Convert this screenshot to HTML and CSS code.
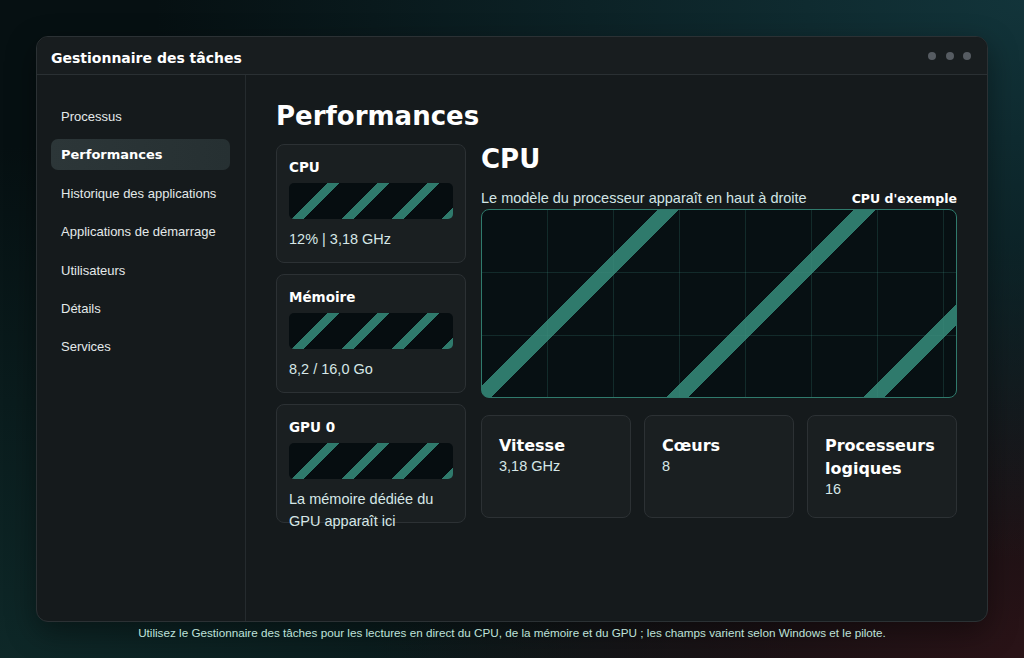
FILE: index.html
```
<!DOCTYPE html>
<html lang="fr">

<head>
    <meta charset="UTF-8">
    <meta name="viewport" content="width=device-width, initial-scale=1.0">
    <title>Gestionnaire des tâches</title>
    <link rel="stylesheet" href="styles.css">
</head>

<body>
    <div class="window">
        <header class="titlebar">
            <h1>Gestionnaire des tâches</h1>
            <div class="dots"><span></span><span></span><span></span></div>
        </header>
        <div class="window-body">
            <nav class="sidebar">
                <a href="javascript:;" class="nav-item">Processus</a>
                <a href="javascript:;" class="nav-item on">Performances</a>
                <a href="javascript:;" class="nav-item">Historique des applications</a>
                <a href="javascript:;" class="nav-item">Applications de démarrage</a>
                <a href="javascript:;" class="nav-item">Utilisateurs</a>
                <a href="javascript:;" class="nav-item">Détails</a>
                <a href="javascript:;" class="nav-item">Services</a>
            </nav>
            <main class="content">
                <h2 class="page-title">Performances</h2>
                <div class="perf">
                    <div class="devices">
                        <div class="device">
                            <h3>CPU</h3>
                            <div class="bar"></div>
                            <p>12% | 3,18 GHz</p>
                        </div>
                        <div class="device">
                            <h3>Mémoire</h3>
                            <div class="bar"></div>
                            <p>8,2 / 16,0 Go</p>
                        </div>
                        <div class="device">
                            <h3>GPU 0</h3>
                            <div class="bar"></div>
                            <p>La mémoire dédiée du GPU apparaît ici</p>
                        </div>
                    </div>
                    <section class="detail">
                        <h2 class="detail-title">CPU</h2>
                        <div class="detail-meta">
                            <span>Le modèle du processeur apparaît en haut à droite</span>
                            <strong>CPU d'exemple</strong>
                        </div>
                        <div class="graph"></div>
                        <div class="stats">
                            <div class="stat">
                                <h4>Vitesse</h4>
                                <p>3,18 GHz</p>
                            </div>
                            <div class="stat">
                                <h4>Cœurs</h4>
                                <p>8</p>
                            </div>
                            <div class="stat">
                                <h4>Processeurs logiques</h4>
                                <p>16</p>
                            </div>
                        </div>
                    </section>
                </div>
            </main>
        </div>
    </div>
    <p class="footnote">Utilisez le Gestionnaire des tâches pour les lectures en direct du CPU, de la mémoire et du GPU ; les champs varient selon Windows et le pilote.</p>
</body>

</html>
```

FILE: styles.css
```
* {
    margin: 0;
    padding: 0;
    box-sizing: border-box;
    text-decoration: none;
}

html,
body {
    height: 100%;
}

body {
    padding: 36px 36px 0;
    overflow: hidden;
    font-family: "Liberation Sans", Arial, sans-serif;
    color: #d6e7e7;
    background:
        radial-gradient(ellipse at 100% 0%, #12343a 0%, rgba(18, 52, 58, 0) 60%),
        radial-gradient(ellipse at 100% 100%, #2a1317 0%, rgba(42, 19, 23, 0) 45%),
        radial-gradient(ellipse at 0% 100%, #0e2828 0%, rgba(14, 40, 40, 0) 55%),
        #061012;
}

h1,
h2,
h3,
h4,
strong,
.nav-item.on {
    font-family: "DejaVu Sans", sans-serif;
    font-weight: 700;
    color: #fff;
}

.window {
    display: flex;
    flex-direction: column;
    height: 586px;
    border: 1px solid #2b3134;
    border-radius: 12px;
    background: #151a1c;
    overflow: hidden;
    box-shadow: 0 10px 30px rgba(0, 0, 0, .4);
}

.titlebar {
    display: flex;
    align-items: center;
    justify-content: space-between;
    height: 38px;
    padding: 0 16px 0 14px;
    border-bottom: 1px solid #2a3033;
    background: #181d1f;
}

.titlebar h1 {
    padding-top: 4px;
    font-size: 14px;
}

.dots {
    display: flex;
    gap: 9.5px;
}

.dots span {
    width: 8px;
    height: 8px;
    border-radius: 50%;
    background: #565c62;
}

.window-body {
    flex: 1;
    display: flex;
}

.sidebar {
    display: flex;
    flex-direction: column;
    gap: 7.4px;
    width: 209px;
    padding: 26px 15px 0 14px;
    border-right: 1px solid #252b2e;
}

.nav-item {
    display: block;
    padding: 8px 10px;
    line-height: 15px;
    font-size: 13px;
    color: #e4e9ea;
    border-radius: 7px;
}

.nav-item.on {
    background: linear-gradient(90deg, #2c3638, #263032);
}

.content {
    flex: 1;
    padding: 26px 30px 0 30px;
}

.page-title {
    font-size: 26px;
    line-height: 30px;
    margin-bottom: 13px;
}

.perf {
    display: grid;
    grid-template-columns: 190px 1fr;
    gap: 15px;
}

.devices {
    display: flex;
    flex-direction: column;
    gap: 11px;
}

.device {
    height: 119px;
    padding: 13px 12px;
    border: 1px solid #2c3134;
    border-radius: 8px;
    background: #1a1f21;
}

.device h3 {
    font-size: 13.5px;
    line-height: 18px;
}

.bar {
    height: 36px;
    margin-top: 7px;
    border-radius: 5px;
    background:
        repeating-linear-gradient(135deg, rgba(0, 0, 0, 0) 0 27px, #2f7a6c 27px 35.4px),
        #060d10;
}

.device p {
    margin-top: 10px;
    font-size: 14.5px;
    line-height: 21.5px;
}

.detail-title {
    font-size: 26px;
    line-height: 30px;
}

.detail-meta {
    display: flex;
    justify-content: space-between;
    align-items: baseline;
    margin-top: 16px;
    font-size: 14.5px;
    line-height: 17px;
    color: #d2e5e5;
}

.detail-meta strong {
    font-size: 12.5px;
}

.graph {
    height: 189px;
    margin-top: 2px;
    border: 1px solid #2f7a6c;
    border-radius: 8px;
    background:
        linear-gradient(90deg, rgba(0, 0, 0, 0) 65px, rgba(60, 140, 125, .22) 65px 66px),
        linear-gradient(180deg, rgba(0, 0, 0, 0) 62px, rgba(60, 140, 125, .22) 62px 63px),
        repeating-linear-gradient(135deg, rgba(0, 0, 0, 0) 0 124px, #2f7a6c 124px 139px),
        #071013;
    background-size: 66px 100%, 100% 63px, auto, auto;
}

.stats {
    display: grid;
    grid-template-columns: repeat(3, 1fr);
    gap: 13px;
    margin-top: 17px;
}

.stat {
    height: 103px;
    padding: 17.5px 17px;
    border: 1px solid #2c3134;
    border-radius: 8px;
    background: #1a1f21;
}

.stat h4 {
    font-size: 16px;
    line-height: 23px;
}

.stat p {
    font-size: 14.5px;
    line-height: 19px;
}

.footnote {
    margin-top: 3px;
    text-align: center;
    font-size: 11.7px;
    line-height: 16px;
    color: #bfe2da;
}
```
